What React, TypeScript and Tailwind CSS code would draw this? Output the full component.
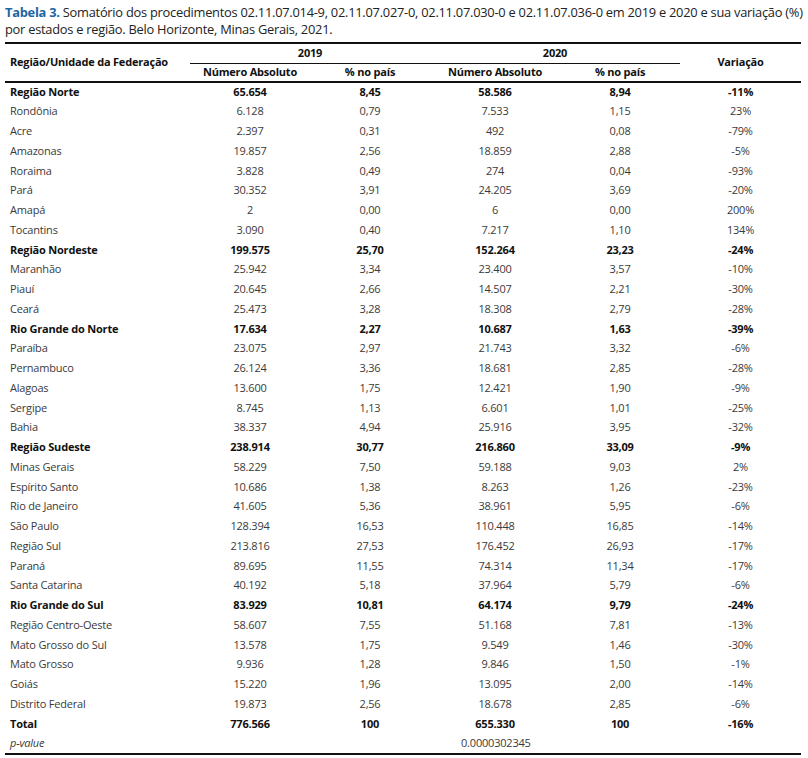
type Row = [string, string, string, string, string, string, boolean?]

const rows: Row[] = [
  ["Região Norte", "65.654", "8,45", "58.586", "8,94", "-11%", true],
  ["Rondônia", "6.128", "0,79", "7.533", "1,15", "23%"],
  ["Acre", "2.397", "0,31", "492", "0,08", "-79%"],
  ["Amazonas", "19.857", "2,56", "18.859", "2,88", "-5%"],
  ["Roraima", "3.828", "0,49", "274", "0,04", "-93%"],
  ["Pará", "30.352", "3,91", "24.205", "3,69", "-20%"],
  ["Amapá", "2", "0,00", "6", "0,00", "200%"],
  ["Tocantins", "3.090", "0,40", "7.217", "1,10", "134%"],
  ["Região Nordeste", "199.575", "25,70", "152.264", "23,23", "-24%", true],
  ["Maranhão", "25.942", "3,34", "23.400", "3,57", "-10%"],
  ["Piauí", "20.645", "2,66", "14.507", "2,21", "-30%"],
  ["Ceará", "25.473", "3,28", "18.308", "2,79", "-28%"],
  ["Rio Grande do Norte", "17.634", "2,27", "10.687", "1,63", "-39%", true],
  ["Paraíba", "23.075", "2,97", "21.743", "3,32", "-6%"],
  ["Pernambuco", "26.124", "3,36", "18.681", "2,85", "-28%"],
  ["Alagoas", "13.600", "1,75", "12.421", "1,90", "-9%"],
  ["Sergipe", "8.745", "1,13", "6.601", "1,01", "-25%"],
  ["Bahia", "38.337", "4,94", "25.916", "3,95", "-32%"],
  ["Região Sudeste", "238.914", "30,77", "216.860", "33,09", "-9%", true],
  ["Minas Gerais", "58.229", "7,50", "59.188", "9,03", "2%"],
  ["Espírito Santo", "10.686", "1,38", "8.263", "1,26", "-23%"],
  ["Rio de Janeiro", "41.605", "5,36", "38.961", "5,95", "-6%"],
  ["São Paulo", "128.394", "16,53", "110.448", "16,85", "-14%"],
  ["Região Sul", "213.816", "27,53", "176.452", "26,93", "-17%"],
  ["Paraná", "89.695", "11,55", "74.314", "11,34", "-17%"],
  ["Santa Catarina", "40.192", "5,18", "37.964", "5,79", "-6%"],
  ["Rio Grande do Sul", "83.929", "10,81", "64.174", "9,79", "-24%", true],
  ["Região Centro-Oeste", "58.607", "7,55", "51.168", "7,81", "-13%"],
  ["Mato Grosso do Sul", "13.578", "1,75", "9.549", "1,46", "-30%"],
  ["Mato Grosso", "9.936", "1,28", "9.846", "1,50", "-1%"],
  ["Goiás", "15.220", "1,96", "13.095", "2,00", "-14%"],
  ["Distrito Federal", "19.873", "2,56", "18.678", "2,85", "-6%"],
  ["Total", "776.566", "100", "655.330", "100", "-16%", true],
]

export default function App() {
  return (
    <div
      className="w-[808px] h-[758px] bg-white px-[5px] pt-[4px] text-[#3a3a3a]"
      style={{ fontFamily: '"Open Sans", "Noto Sans", sans-serif' }}
    >
      <div className="text-[12.85px] leading-[17px] tracking-[-0.25px] text-[#222] mb-[4px] whitespace-nowrap">
        <p>
          <span className="font-bold text-[#1c66a3]">Tabela 3.</span> Somatório dos procedimentos 02.11.07.014-9,
          02.11.07.027-0, 02.11.07.030-0 e 02.11.07.036-0 em 2019 e 2020 e sua variação (%)
        </p>
        <p>por estados e região. Belo Horizonte, Minas Gerais, 2021.</p>
      </div>

      <table className="w-[796px] table-fixed border-collapse text-[11px] tracking-[-0.2px]">
        <colgroup>
          <col className="w-[185px]" />
          <col className="w-[120px]" />
          <col className="w-[120px]" />
          <col className="w-[130px]" />
          <col className="w-[120px]" />
          <col className="w-[121px]" />
        </colgroup>
        <thead className="text-[#111]">
          <tr className="h-[20px] border-t-2 border-[#111]">
            <th rowSpan={2} className="text-left pl-[5px] font-bold border-b-2 border-[#111]">
              Região/Unidade da Federação
            </th>
            <th colSpan={2} className="font-bold border-b border-[#111]">
              2019
            </th>
            <th colSpan={2} className="font-bold border-b border-[#111]">
              2020
            </th>
            <th rowSpan={2} className="font-bold border-b-2 border-[#111]">
              Variação
            </th>
          </tr>
          <tr className="h-[19px] border-b-2 border-[#111]">
            <th className="font-bold">Número Absoluto</th>
            <th className="font-bold">% no país</th>
            <th className="font-bold">Número Absoluto</th>
            <th className="font-bold">% no país</th>
          </tr>
        </thead>
        <tbody>
          {rows.map((r) => (
            <tr key={r[0]} className={`h-[19.75px] ${r[6] ? "font-bold text-[#111]" : ""}`}>
              <td className="pl-[5px]">{r[0]}</td>
              <td className="text-center">{r[1]}</td>
              <td className="text-center">{r[2]}</td>
              <td className="text-center">{r[3]}</td>
              <td className="text-center">{r[4]}</td>
              <td className="text-center">{r[5]}</td>
            </tr>
          ))}
          <tr className="h-[19.75px] border-b-2 border-[#111]">
            <td className="pl-[5px] italic">p-value</td>
            <td></td>
            <td></td>
            <td colSpan={2} className="pl-[31px]">
              0.0000302345
            </td>
            <td></td>
          </tr>
        </tbody>
      </table>
    </div>
  )
}
